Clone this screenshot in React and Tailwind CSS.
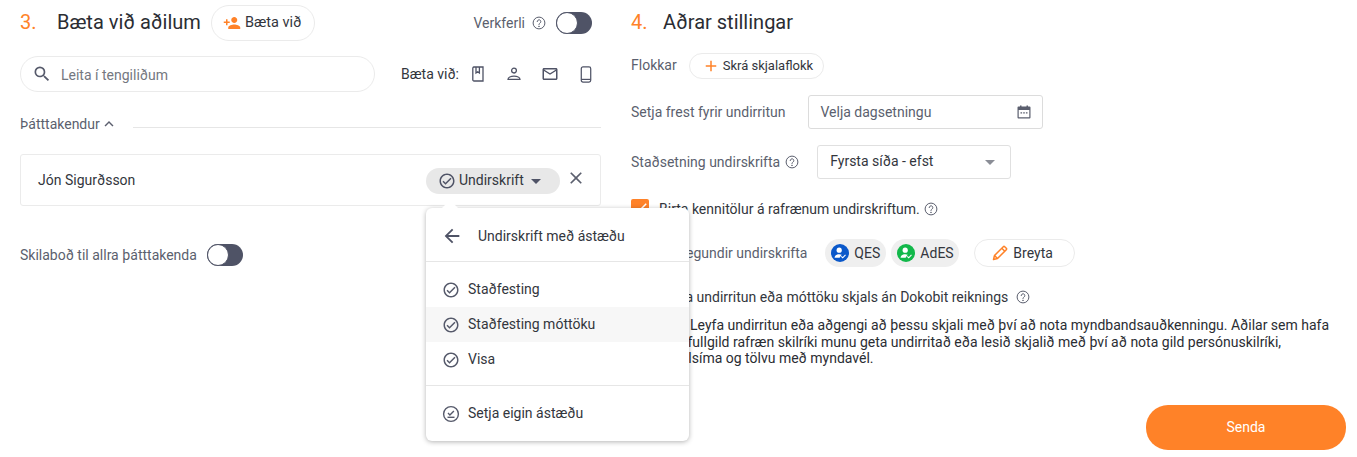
import React from 'react';
import { MdPersonAdd, MdSearch, MdExpandLess, MdOutlineCheckCircle, MdClose, MdArrowBack, MdArrowDropDown, MdAdd, MdMailOutline, MdCheck } from 'react-icons/md';

const Help = ({ className = '' }) => (
  <svg viewBox="0 0 14 14" className={`w-[14px] h-[14px] shrink-0 ${className}`} fill="none" stroke="#5b5f6e" strokeWidth="1">
    <circle cx="7" cy="7" r="5.9" />
    <path d="M5.2 5.6a1.8 1.8 0 1 1 2.9 1.4c-.7.5-1.1.8-1.1 1.6" strokeLinecap="round" />
    <circle cx="7" cy="10.3" r=".35" fill="#5b5f6e" />
  </svg>
);

const Toggle = () => (
  <div className="w-[36px] h-[22px] rounded-full bg-[#4f5366] flex items-center shrink-0">
    <div className="w-[22px] h-[22px] rounded-full bg-white border border-[#4f5366]" />
  </div>
);

const Check = () => <MdOutlineCheckCircle className="w-[18px] h-[18px] text-[#565a6b] shrink-0" />;

const MenuItem = ({ label, hover }) => (
  <div className={`h-[35px] flex items-center pl-[16px] gap-[8px] text-[14px] text-[#33363d] ${hover ? 'bg-[#f7f7f7]' : ''}`}>
    <Check />
    <span>{label}</span>
  </div>
);

const Badge = ({ color, label, className }) => (
  <div className={`h-[28px] rounded-full bg-[#efefef] flex items-center pl-[6px] gap-[5px] text-[14px] text-[#33363d] ${className}`}>
    <svg viewBox="0 0 18 18" className="w-[18px] h-[18px]">
      <circle cx="9" cy="9" r="9" fill={color} />
      <circle cx="8.2" cy="6.2" r="2.6" fill="white" />
      <path d="M3.5 13.8c.2-2.5 2.2-3.6 4.7-3.6 1 0 1.8.2 2.5.5L8.6 13.8z" fill="white" />
      <path d="M10.3 12.4l1.4 1.4 2.8-3" stroke="white" strokeWidth="1.1" fill="none" />
    </svg>
    <span>{label}</span>
  </div>
);

export default function App() {
  return (
    <div className="relative flex w-full h-[457px] bg-white overflow-hidden font-['Roboto',sans-serif] text-[14px] text-[#5b5f6e]">
      {/* Left column */}
      <div className="ml-[20px] w-[581px] shrink-0 pt-[5px]">
        <div className="h-[36px] flex items-center">
          <span className="w-[37px] text-[20px] text-[#ff8228] mb-[2px]">3.</span>
          <span className="text-[20px] text-[#2b2d33] mb-[2px]">Bæta við aðilum</span>
          <button className="ml-[10px] w-[104px] h-[36px] rounded-full border border-[#ebebeb] flex items-center pl-[11px] gap-[4px] text-[#33363d] text-[14.5px]">
            <MdPersonAdd className="w-[18px] h-[18px] text-[#ff8228]" />
            <span>Bæta við</span>
          </button>
          <span className="ml-auto">Verkferli</span>
          <Help className="ml-[7px]" />
          <div className="ml-[10px] mr-[9px]"><Toggle /></div>
        </div>

        <div className="mt-[15px] h-[36px] flex items-center">
          <div className="w-[355px] shrink-0 h-[36px] rounded-full border border-[#ebebeb] flex items-center pl-[11px] gap-[9px] text-[#74777f]">
            <MdSearch className="w-[20px] h-[20px] text-[#565a6b]" />
            <span className="mt-[2px]">Leita í tengiliðum</span>
          </div>
          <span className="ml-[26px] text-[#33363d] whitespace-nowrap">Bæta við:</span>
          <div className="ml-[1px] flex items-center shrink-0">
            <div className="w-[36px] flex justify-center">
              <svg viewBox="0 0 14 16" className="w-[14px] h-[16px]" fill="none" stroke="#4f5366" strokeWidth="1.3">
                <path d="M2.2 1h9.8v14H3a1.2 1.2 0 0 1-1.2-1.2V2.2A1.2 1.2 0 0 1 3 1z" />
                <path d="M5 1v6l1.7-1.3L8.4 7V1" />
              </svg>
            </div>
            <div className="w-[36px] flex justify-center">
              <svg viewBox="0 0 16 16" className="w-[16px] h-[16px]" fill="none" stroke="#4f5366" strokeWidth="1.3">
                <circle cx="8" cy="4.6" r="2.4" />
                <path d="M2 13.4c0-2 3-3.2 6-3.2s6 1.2 6 3.2z" />
              </svg>
            </div>
            <div className="w-[36px] flex justify-center"><MdMailOutline className="w-[18px] h-[18px] text-[#4f5366]" /></div>
            <div className="w-[36px] flex justify-center">
              <svg viewBox="0 0 12 18" className="w-[12px] h-[17px]" fill="none" stroke="#4f5366" strokeWidth="1.3">
                <rect x="1" y="1" width="10" height="16" rx="1.8" />
                <path d="M1 14.2h10" />
              </svg>
            </div>
          </div>
        </div>

        <div className="mt-[24px] h-[16px] flex items-center">
          <span>Þátttakendur</span>
          <MdExpandLess className="w-[18px] h-[18px]" />
          <div className="ml-[15px] flex-1 h-px bg-[#e6e6e6] mt-[6px]" />
        </div>

        <div className="relative mt-[22px] h-[52px] border border-[#ebebeb] rounded-[3px] flex items-center pl-[17px] text-[#33363d]">
          <span>Jón Sigurðsson</span>
          <div className="ml-auto mb-[-1px] w-[134px] h-[26px] rounded-full bg-[#e8e8e8] flex items-center pl-[12px] gap-[3px]">
            <MdOutlineCheckCircle className="w-[18px] h-[18px] text-[#4f5366]" />
            <span>Undirskrift</span>
            <MdArrowDropDown className="w-[24px] h-[24px] text-[#4f5366] ml-[-3px]" />
          </div>
          <MdClose className="ml-[6px] mr-[14px] w-[20px] h-[20px] text-[#5b5f6e] mt-[-4px]" />

          <div className="absolute z-10 left-[405px] top-[53px] w-[263px] h-[233px] bg-white rounded-[6px] shadow-[0_1px_5px_rgba(0,0,0,0.3)]">
            <div className="absolute left-[16px] top-[-8px] w-0 h-0 border-l-[8px] border-r-[8px] border-b-[8px] border-l-transparent border-r-transparent border-b-white" />
            <div className="h-[54px] flex items-center pl-[15px] pt-[3px] gap-[15px] border-b border-[#e6e6e6] text-[#33363d]">
              <MdArrowBack className="w-[22px] h-[22px] text-[#4f5366]" />
              <span>Undirskrift með ástæðu</span>
            </div>
            <div className="pt-[10px] pb-[8px] border-b border-[#e6e6e6]">
              <MenuItem label="Staðfesting" />
              <MenuItem label="Staðfesting móttöku" hover />
              <MenuItem label="Visa" />
            </div>
            <div className="pt-[10px]">
              <div className="h-[35px] flex items-center pl-[16px] gap-[8px] text-[#33363d]">
                <svg viewBox="0 0 18 18" className="w-[18px] h-[18px] shrink-0" fill="none" stroke="#565a6b" strokeWidth="1.4">
                  <circle cx="9" cy="9" r="7.4" />
                  <path d="M6 8l1.9 1.9 4-4" />
                  <path d="M5.5 12.3h7" />
                </svg>
                <span>Setja eigin ástæðu</span>
              </div>
            </div>
          </div>
        </div>

        <div className="mt-[38px] h-[22px] flex items-center">
          <span>Skilaboð til allra þátttakenda</span>
          <div className="ml-[10px]"><Toggle /></div>
        </div>
      </div>

      {/* Right column */}
      <div className="ml-[30px] flex-1 pt-[5px] pr-[11px]">
        <div className="h-[36px] flex items-center">
          <span className="w-[32px] text-[20px] text-[#ff8228] mb-[2px]">4.</span>
          <span className="text-[20px] text-[#2b2d33] mb-[2px]">Aðrar stillingar</span>
        </div>

        <div className="mt-[12px] h-[26px] flex items-center">
          <span className="mb-[2px]">Flokkar</span>
          <button className="ml-[12px] w-[135px] h-[26px] rounded-full border border-[#ebebeb] flex items-center pl-[12px] gap-[3px] text-[#33363d] text-[13px]">
            <MdAdd className="w-[18px] h-[18px] text-[#ff8228]" />
            <span>Skrá skjalaflokk</span>
          </button>
        </div>

        <div className="mt-[16px] h-[34px] flex items-center">
          <span>Setja frest fyrir undirritun</span>
          <div className="ml-[23px] w-[235px] h-[34px] border border-[#dcdcdc] rounded-[3px] flex items-center justify-between pl-[11px] pr-[11px]">
            <span>Velja dagsetningu</span>
            <svg viewBox="0 0 14 14" className="w-[14px] h-[14px]">
              <path d="M1.5 1.5H3V.5h1.5v1h5v-1H11v1h1.5a1 1 0 0 1 1 1V12.5a1 1 0 0 1-1 1h-11a1 1 0 0 1-1-1V2.5a1 1 0 0 1 1-1zM1.7 5v7.3h10.6V5z" fill="#5b5f6e" fillRule="evenodd" />
              <path d="M3.5 7.2h1.6v1.2H3.5zM6.2 7.2h1.6v1.2H6.2zM8.9 7.2h1.6v1.2H8.9z" fill="#5b5f6e" />
            </svg>
          </div>
        </div>

        <div className="mt-[16px] h-[34px] flex items-center">
          <span>Staðsetning undirskrifta</span>
          <Help className="ml-[5px]" />
          <div className="ml-[18px] w-[194px] h-[34px] border border-[#e0e0e0] rounded-[3px] flex items-center justify-between pl-[12px] pr-[8px] text-[#33363d]">
            <span className="mb-[2px]">Fyrsta síða - efst</span>
            <MdArrowDropDown className="w-[24px] h-[24px] text-[#8a8d96]" />
          </div>
        </div>

        <div className="mt-[20px] h-[18px] flex items-center">
          <div className="w-[18px] h-[18px] rounded-[2px] bg-[#ff8228] flex items-center justify-center">
            <MdCheck className="w-[18px] h-[18px] text-white" />
          </div>
          <span className="ml-[10px] text-[#33363d] mt-[2px]">Birta kennitölur á rafrænum undirskriftum.</span>
          <Help className="ml-[4px] mt-[2px]" />
        </div>

        <div className="mt-[22px] h-[28px] flex items-center">
          <span>Leyfðar tegundir undirskrifta</span>
          <Badge color="#0a58ca" label="QES" className="ml-[18px] w-[61px]" />
          <Badge color="#12b84a" label="AdES" className="ml-[5px] w-[68px]" />
          <button className="ml-[15px] w-[101px] h-[28px] rounded-full border border-[#ebebeb] flex items-center pl-[16px] gap-[4px] text-[#33363d]">
            <svg viewBox="0 0 18 18" className="w-[18px] h-[18px]" fill="none" stroke="#ff8228" strokeWidth="1.5" strokeLinejoin="round">
              <path d="M2.5 15.5l1-4L12.3 2.7a1 1 0 0 1 1.4 0l1.6 1.6a1 1 0 0 1 0 1.4L6.5 14.5z" />
              <path d="M3.5 11.5l3 3M10.8 4.2l3 3" />
            </svg>
            <span>Breyta</span>
          </button>
        </div>

        <div className="mt-[22px] h-[16px] flex items-center pl-[28px] text-[#33363d]">
          <span>Leyfa undirritun eða móttöku skjals án Dokobit reiknings</span>
          <Help className="ml-[8px]" />
        </div>

        <p className="mt-[12px] ml-[28px] indent-[31px] leading-[16.5px] text-[#2b2d33]">
          Leyfa undirritun eða aðgengi að þessu skjali með því að nota myndbandsauðkenningu. Aðilar sem hafa<br />
          ekki fullgild rafræn skilríki munu geta undirritað eða lesið skjalið með því að nota gild persónuskilríki,<br />
          snjallsíma og tölvu með myndavél.
        </p>

        <div className="mt-[38px] flex justify-end">
          <button className="w-[200px] h-[45px] rounded-[22px] bg-[#ff8228] text-white">Senda</button>
        </div>
      </div>
    </div>
  );
}
